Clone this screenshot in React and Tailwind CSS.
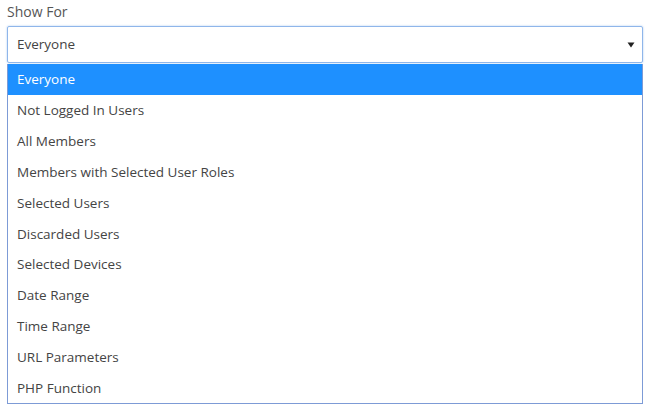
const options = [
  'Everyone',
  'Not Logged In Users',
  'All Members',
  'Members with Selected User Roles',
  'Selected Users',
  'Discarded Users',
  'Selected Devices',
  'Date Range',
  'Time Range',
  'URL Parameters',
  'PHP Function',
];

export default function App() {
  const selected = 'Everyone';

  return (
    <div className="w-[650px] h-[410px] bg-white pl-[7px] pr-[7px] pt-[4px] font-['Open_Sans',sans-serif] text-[13.5px] text-[#444]">
      <div className="h-[22px] leading-[16px] text-[14px] text-[#555]">Show For</div>

      {/* select box */}
      <div className="w-[636px] h-[37px] border border-[#8fb6ea] rounded-[2px] flex items-center justify-between pl-[9px] pr-[6px] shadow-[0_0_2px_rgba(102,160,230,0.6)]">
        <span>{selected}</span>
        <svg width="8" height="6" viewBox="0 0 8 6" className="mr-[1px]">
          <path d="M0.5 0.5 L7.5 0.5 L4 5.5 Z" fill="#222" />
        </svg>
      </div>

      {/* dropdown list */}
      <div className="w-[636px] border border-[#7d9bd6] border-t-0 mt-[1px]">
        {options.map((opt) => (
          <div
            key={opt}
            className={
              opt === selected
                ? 'h-[30.85px] flex items-center pl-[9px] bg-[#1e90ff] text-white'
                : 'h-[30.85px] flex items-center pl-[9px] text-[#444]'
            }
          >
            {opt}
          </div>
        ))}
      </div>
    </div>
  );
}
